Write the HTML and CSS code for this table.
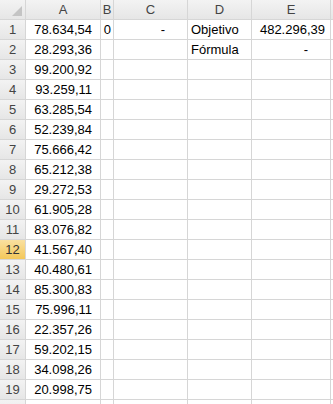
FILE: index.html
```html
<!DOCTYPE html>
<html>
<head>
<meta charset="utf-8">
<link rel="stylesheet" href="styles.css">
</head>
<body>
<div class="sheet">
  <div class="hd corner"><span class="tri"></span></div>
  <div class="hd col">A</div>
  <div class="hd col">B</div>
  <div class="hd col">C</div>
  <div class="hd col">D</div>
  <div class="hd col">E</div>
  <div class="hd col"></div>

  <div class="hd row">1</div><div class="c num">78.634,54</div><div class="c num b">0</div><div class="c dash">-</div><div class="c txt">Objetivo</div><div class="c acc">482.296,39</div><div class="c"></div>
  <div class="hd row">2</div><div class="c num">28.293,36</div><div class="c"></div><div class="c"></div><div class="c txt">Fórmula</div><div class="c dash">-</div><div class="c"></div>
  <div class="hd row">3</div><div class="c num">99.200,92</div><div class="c"></div><div class="c"></div><div class="c"></div><div class="c"></div><div class="c"></div>
  <div class="hd row">4</div><div class="c num">93.259,11</div><div class="c"></div><div class="c"></div><div class="c"></div><div class="c"></div><div class="c"></div>
  <div class="hd row">5</div><div class="c num">63.285,54</div><div class="c"></div><div class="c"></div><div class="c"></div><div class="c"></div><div class="c"></div>
  <div class="hd row">6</div><div class="c num">52.239,84</div><div class="c"></div><div class="c"></div><div class="c"></div><div class="c"></div><div class="c"></div>
  <div class="hd row">7</div><div class="c num">75.666,42</div><div class="c"></div><div class="c"></div><div class="c"></div><div class="c"></div><div class="c"></div>
  <div class="hd row">8</div><div class="c num">65.212,38</div><div class="c"></div><div class="c"></div><div class="c"></div><div class="c"></div><div class="c"></div>
  <div class="hd row">9</div><div class="c num">29.272,53</div><div class="c"></div><div class="c"></div><div class="c"></div><div class="c"></div><div class="c"></div>
  <div class="hd row">10</div><div class="c num">61.905,28</div><div class="c"></div><div class="c"></div><div class="c"></div><div class="c"></div><div class="c"></div>
  <div class="hd row">11</div><div class="c num">83.076,82</div><div class="c"></div><div class="c"></div><div class="c"></div><div class="c"></div><div class="c"></div>
  <div class="hd row sel">12</div><div class="c num">41.567,40</div><div class="c"></div><div class="c"></div><div class="c"></div><div class="c"></div><div class="c"></div>
  <div class="hd row">13</div><div class="c num">40.480,61</div><div class="c"></div><div class="c"></div><div class="c"></div><div class="c"></div><div class="c"></div>
  <div class="hd row">14</div><div class="c num">85.300,83</div><div class="c"></div><div class="c"></div><div class="c"></div><div class="c"></div><div class="c"></div>
  <div class="hd row">15</div><div class="c num">75.996,11</div><div class="c"></div><div class="c"></div><div class="c"></div><div class="c"></div><div class="c"></div>
  <div class="hd row">16</div><div class="c num">22.357,26</div><div class="c"></div><div class="c"></div><div class="c"></div><div class="c"></div><div class="c"></div>
  <div class="hd row">17</div><div class="c num">59.202,15</div><div class="c"></div><div class="c"></div><div class="c"></div><div class="c"></div><div class="c"></div>
  <div class="hd row">18</div><div class="c num">34.098,26</div><div class="c"></div><div class="c"></div><div class="c"></div><div class="c"></div><div class="c"></div>
  <div class="hd row">19</div><div class="c num">20.998,75</div><div class="c"></div><div class="c"></div><div class="c"></div><div class="c"></div><div class="c"></div>
  <div class="hd row"></div><div class="c"></div><div class="c"></div><div class="c"></div><div class="c"></div><div class="c"></div><div class="c"></div>
</div>
</body>
</html>
```

FILE: styles.css
```css
html, body {
  margin: 0;
  padding: 0;
  background: #ffffff;
  overflow: hidden;
}
.sheet {
  display: grid;
  grid-template-columns: 25px 74px 12px 73px 63px 78px 1fr;
  grid-auto-rows: 19px;
  gap: 1px;
  background: #d6d6d6;
  width: 333px;
  font-family: "Liberation Sans", Arial, sans-serif;
  font-size: 13px;
  line-height: 19px;
  color: #000;
}
.hd {
  background: linear-gradient(#f3f3f3, #e6e6e6);
  color: #444;
  text-align: center;
  white-space: nowrap;
  overflow: hidden;
}
.corner {
  position: relative;
}
.tri {
  position: absolute;
  right: 3px;
  bottom: 3px;
  width: 0;
  height: 0;
  border-left: 10px solid transparent;
  border-bottom: 10px solid #c4c4c4;
}
.row.sel {
  background: linear-gradient(#f9e0a0, #f4c85a);
  color: #333;
}
.c {
  background: #fff;
  white-space: nowrap;
  overflow: hidden;
}
.num {
  text-align: right;
  padding-right: 8px;
}
.b {
  padding-right: 2px;
}
.dash {
  text-align: right;
  padding-right: 22px;
}
.acc {
  text-align: right;
  padding-right: 5px;
}
.txt {
  padding-left: 3px;
}
```
